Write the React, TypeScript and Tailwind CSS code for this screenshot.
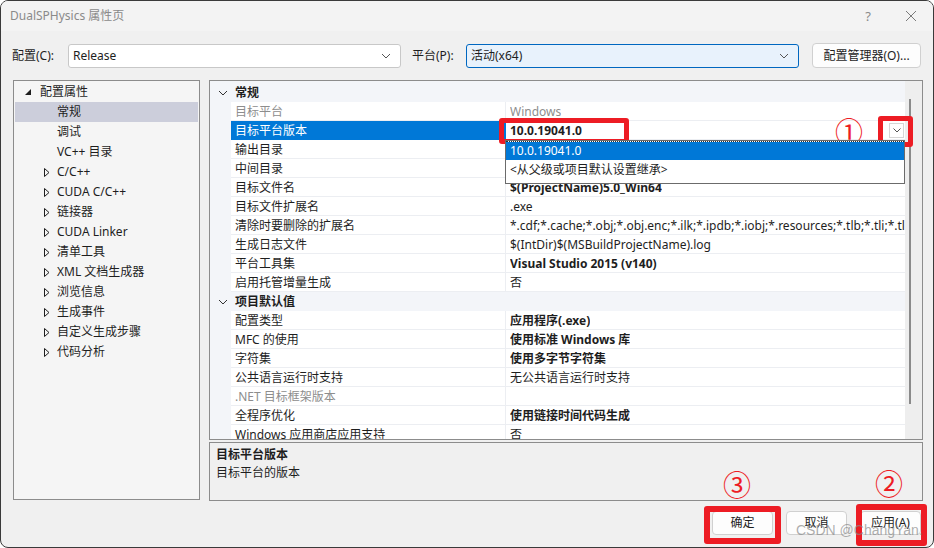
import React from 'react';

type Row = { name: string; value?: string; bold?: boolean; dim?: boolean; selected?: boolean };

const general: Row[] = [
  { name: '目标平台', value: 'Windows', dim: true },
  { name: '目标平台版本', value: '10.0.19041.0', bold: true, selected: true },
  { name: '输出目录' },
  { name: '中间目录' },
  { name: '目标文件名', value: '$(ProjectName)5.0_Win64', bold: true },
  { name: '目标文件扩展名', value: '.exe' },
  { name: '清除时要删除的扩展名', value: '*.cdf;*.cache;*.obj;*.obj.enc;*.ilk;*.ipdb;*.iobj;*.resources;*.tlb;*.tli;*.tlh;*.tmp;*.rsp' },
  { name: '生成日志文件', value: '$(IntDir)$(MSBuildProjectName).log' },
  { name: '平台工具集', value: 'Visual Studio 2015 (v140)', bold: true },
  { name: '启用托管增量生成', value: '否' },
];

const defaults: Row[] = [
  { name: '配置类型', value: '应用程序(.exe)', bold: true },
  { name: 'MFC 的使用', value: '使用标准 Windows 库', bold: true },
  { name: '字符集', value: '使用多字节字符集', bold: true },
  { name: '公共语言运行时支持', value: '无公共语言运行时支持' },
  { name: '.NET 目标框架版本', dim: true },
  { name: '全程序优化', value: '使用链接时间代码生成', bold: true },
  { name: 'Windows 应用商店应用支持', value: '否' },
];

const tree = [
  { label: '常规', leaf: true, selected: true },
  { label: '调试', leaf: true },
  { label: 'VC++ 目录', leaf: true },
  { label: 'C/C++' },
  { label: 'CUDA C/C++' },
  { label: '链接器' },
  { label: 'CUDA Linker' },
  { label: '清单工具' },
  { label: 'XML 文档生成器' },
  { label: '浏览信息' },
  { label: '生成事件' },
  { label: '自定义生成步骤' },
  { label: '代码分析' },
];

const Chevron = ({ className = '' }: { className?: string }) => (
  <svg width="10" height="6" viewBox="0 0 10 6" className={className}>
    <path d="M1 1 L5 5 L9 1" fill="none" stroke="currentColor" strokeWidth="1" />
  </svg>
);

const Combo = ({ value, active }: { value: string; active?: boolean }) => (
  <div
    className={`w-[333px] h-[24px] rounded-[3px] border flex items-center justify-between pl-[4px] pr-[9px] ${
      active ? 'bg-[#e8f2fc] border-[#0067c0]' : 'bg-white border-[#c8c8c8]'
    }`}
  >
    <span>{value}</span>
    <Chevron className="text-[#555]" />
  </div>
);

const CategoryRow = ({ label }: { label: string }) => (
  <div className="flex h-[19px] bg-[#f3f5f9] items-center">
    <div className="w-[21px] flex justify-center">
      <Chevron className="text-[#333] ml-[4px]" />
    </div>
    <span className="pl-[4px] font-bold text-[#1e1e1e]">{label}</span>
  </div>
);

const PropRow = ({ row }: { row: Row }) => (
  <div className="flex h-[19px]">
    <div className="w-[21px] bg-[#f3f5f9] shrink-0" />
    <div
      className={`w-[275px] shrink-0 pl-[4px] pt-[1px] flex items-center border-b border-r whitespace-nowrap overflow-hidden ${
        row.selected ? 'bg-[#0078d7] text-white border-[#0078d7]' : 'border-[#eceef2]'
      } ${row.dim ? 'text-[#8d8d8d]' : ''}`}
    >
      {row.name}
    </div>
    <div className="relative flex-1 min-w-0 pl-[4px] pt-[1px] flex items-center border-b border-[#eceef2]">
      <span
        className={`whitespace-nowrap overflow-hidden ${row.bold ? 'font-bold' : ''} ${
          row.dim ? 'text-[#8d8d8d]' : 'text-[#1e1e1e]'
        }`}
      >
        {row.value}
      </span>
      {row.selected && (
        <>
          <div className="absolute right-[1px] top-[2px] w-[15px] h-[15px] border border-[#d6d6d6] bg-white flex items-center justify-center">
            <svg width="8" height="5" viewBox="0 0 8 5">
              <path d="M0.5 0.5 L4 4 L7.5 0.5" fill="none" stroke="#555" strokeWidth="1" />
            </svg>
          </div>
          <div className="absolute left-[-1px] top-[19px] w-[400px] h-[44px] bg-white border border-[#6b6b6b] z-10">
            <div className="h-[1px] border-t border-dotted border-[#333]" />
            <div className="h-[18px] bg-[#0078d7] text-white pl-[4px] flex items-center">10.0.19041.0</div>
            <div className="h-[19px] pl-[4px] flex items-center text-[#1e1e1e]">&lt;从父级或项目默认设置继承&gt;</div>
          </div>
        </>
      )}
    </div>
  </div>
);

const Button = ({ label }: { label: string }) => (
  <div className="w-[61px] h-[24px] rounded-[4px] border border-[#d0d0d0] bg-[#fdfdfd] flex items-center justify-center text-[#1e1e1e]">
    {label}
  </div>
);

export default function App() {
  return (
    <div
      className="relative w-[934px] h-[548px] overflow-hidden rounded-[8px] border border-[#3a3a3a] bg-[#f0f0f0] text-[12px] text-[#1e1e1e] leading-[14px]"
      style={{ fontFamily: '"Noto Sans", "Noto Sans CJK SC", sans-serif' }}
    >
      {/* title bar */}
      <div className="h-[30px] bg-[#f3f3f3] flex items-center justify-between pl-[9px] pr-[16px]">
        <span className="text-[#8a8a8a]">DualSPHysics 属性页</span>
        <div className="flex items-center gap-[34px] text-[#8a8a8a]">
          <span className="text-[13px]">?</span>
          <svg width="12" height="12" viewBox="0 0 12 12">
            <path d="M1 1 L11 11 M11 1 L1 11" stroke="#7a7a7a" strokeWidth="1" />
          </svg>
        </div>
      </div>

      {/* configuration row */}
      <div className="flex items-center pl-[11px] mt-[12px] h-[25px]">
        <span className="w-[56px]">配置(C):</span>
        <Combo value="Release" />
        <span className="w-[54px] ml-[11px]">平台(P):</span>
        <Combo value="活动(x64)" active />
        <div className="w-[109px] h-[25px] ml-[13px] rounded-[4px] border border-[#d0d0d0] bg-[#fdfdfd] flex items-center justify-center">
          配置管理器(O)...
        </div>
      </div>

      {/* main area */}
      <div className="flex gap-[9px] pl-[12px] mt-[12px]">
        <div className="w-[187px] h-[420px] border border-[#8c8c8c] bg-[#f5f5f5] pt-[1px] px-[1px]">
          <div className="h-[20px] flex items-center">
            <svg width="7" height="7" viewBox="0 0 7 7" className="ml-[10px] mr-[8px]">
              <path d="M6 0 L6 6 L0 6 Z" fill="#1e1e1e" />
            </svg>
            <span>配置属性</span>
          </div>
          {tree.map((t) => (
            <div
              key={t.label}
              className={`h-[20px] flex items-center ${t.selected ? 'bg-[#cccedb]' : ''}`}
            >
              <div className="w-[42px] flex justify-end pr-[7px]">
                {!t.leaf && (
                  <svg width="6" height="9" viewBox="0 0 6 9">
                    <path d="M0.5 0.5 L5 4.5 L0.5 8.5 Z" fill="none" stroke="#1e1e1e" strokeWidth="1" />
                  </svg>
                )}
              </div>
              <span>{t.label}</span>
            </div>
          ))}
        </div>

        <div className="w-[714px] flex flex-col gap-[2px]">
          <div className="h-[360px] border border-[#8c8c8c] bg-white flex overflow-hidden">
            <div className="flex-1 min-w-0">
              <div className="h-[2px] bg-[#f3f5f9]" />
              <CategoryRow label="常规" />
              {general.map((r) => (
                <PropRow key={r.name} row={r} />
              ))}
              <CategoryRow label="项目默认值" />
              {defaults.map((r) => (
                <PropRow key={r.name} row={r} />
              ))}
            </div>
            <div className="w-[17px] bg-[#eeeeee] relative">
              <div className="absolute left-[4px] top-[18px] w-[2px] h-[305px] bg-[#8a8a8a]" />
            </div>
          </div>
          <div className="h-[59px] border border-[#8c8c8c] bg-[#f0f0f0] pl-[6px] pt-[5px] flex flex-col gap-[4px]">
            <span className="font-bold">目标平台版本</span>
            <span>目标平台的版本</span>
          </div>
        </div>
      </div>

      {/* buttons */}
      <div className="flex justify-end gap-[13px] pr-[12px] mt-[10px]">
        <Button label="确定" />
        <Button label="取消" />
        <Button label="应用(A)" />
      </div>

      {/* annotations */}
      <div className="absolute left-[498px] top-[117px] w-[130px] h-[26px] border-[5px] border-[#ed1c24] rounded-[3px]" />
      <div className="absolute left-[877px] top-[115px] w-[35px] h-[31px] border-[5px] border-[#ed1c24] rounded-[3px]" />
      <div className="absolute left-[703px] top-[505px] w-[77px] h-[38px] border-[6px] border-[#ed1c24] rounded-[3px]" />
      <div className="absolute left-[855px] top-[503px] w-[71px] h-[42px] border-[6px] border-[#ed1c24] rounded-[3px]" />
      <span className="absolute left-[834px] top-[116px] text-[28px] leading-none text-[#ed1c24]" style={{ fontFamily: '"Noto Sans CJK SC", sans-serif' }}>①</span>
      <span className="absolute left-[722px] top-[469px] text-[28px] leading-none text-[#ed1c24]" style={{ fontFamily: '"Noto Sans CJK SC", sans-serif' }}>③</span>
      <span className="absolute left-[874px] top-[468px] text-[28px] leading-none text-[#ed1c24]" style={{ fontFamily: '"Noto Sans CJK SC", sans-serif' }}>②</span>
      <span
        className="absolute left-[795px] top-[522px] text-[14px] leading-none text-[#8a8a8a]/70"
        style={{ fontFamily: '"Liberation Sans", sans-serif' }}
      >
        CSDN @ChangYan.
      </span>
    </div>
  );
}
